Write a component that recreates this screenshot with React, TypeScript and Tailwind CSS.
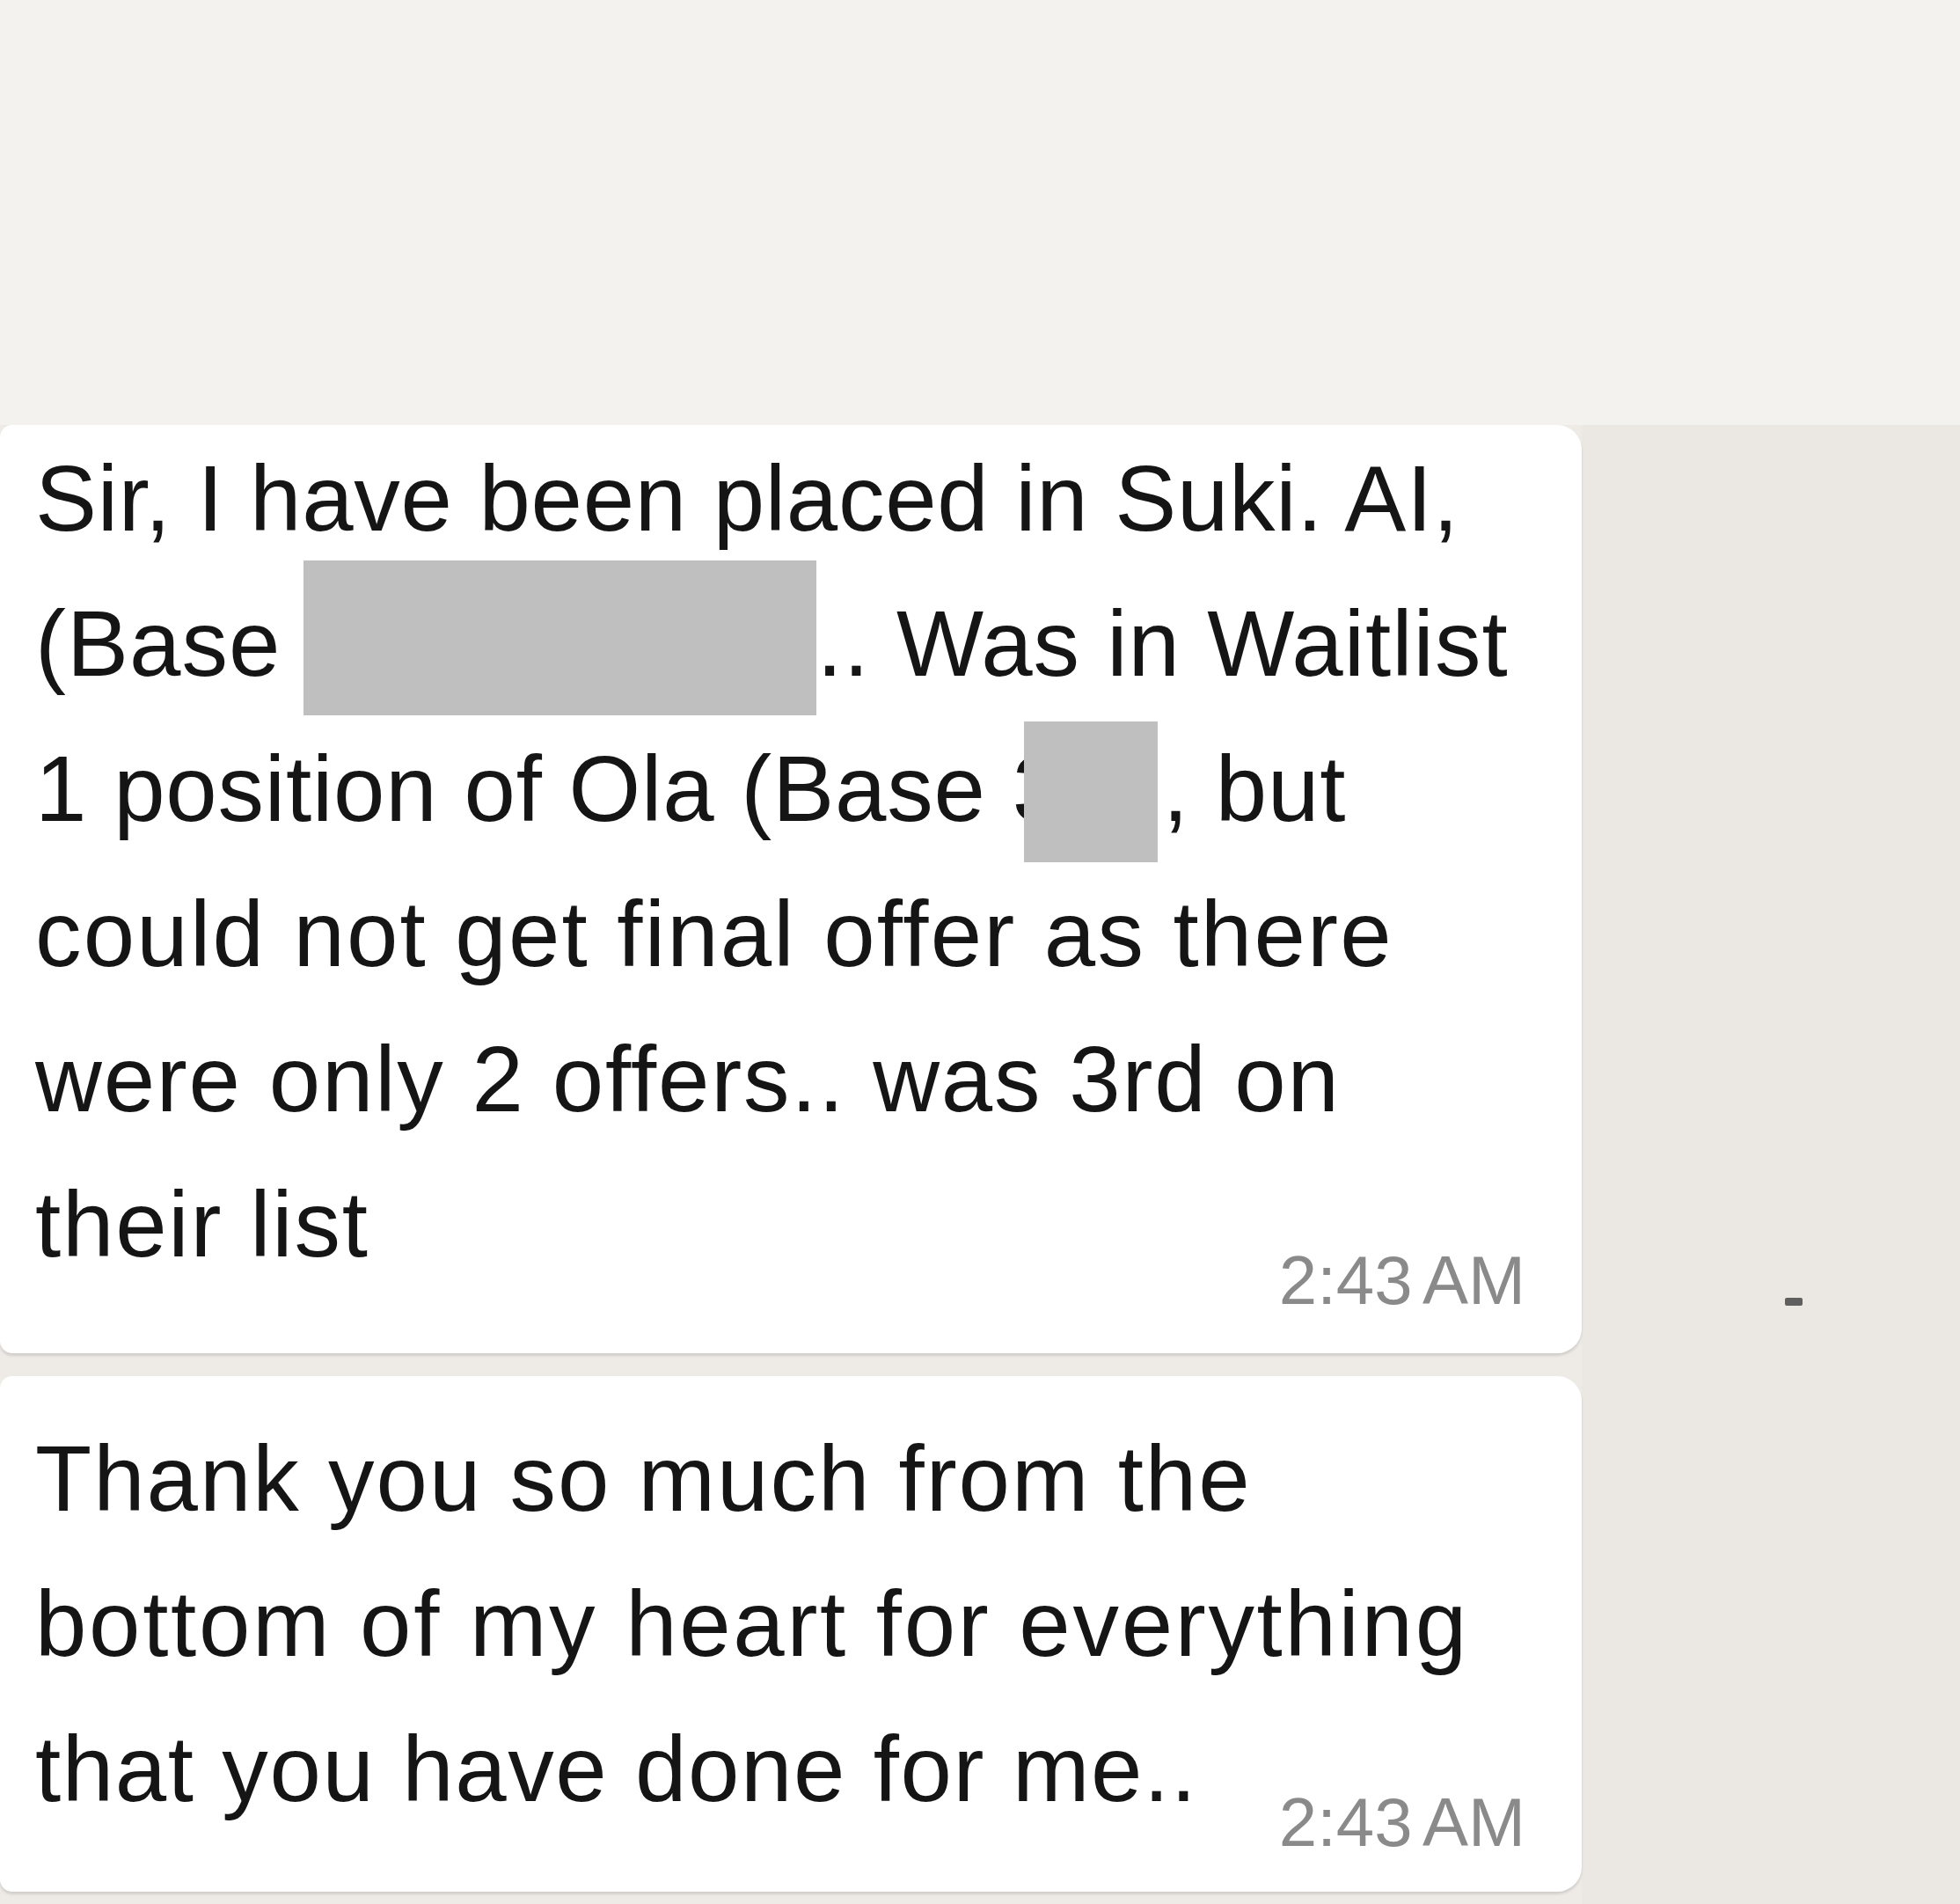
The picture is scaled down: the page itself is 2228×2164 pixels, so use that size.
const FONT = "font-['Liberation_Sans',Arial,sans-serif]";

function Redact({ className }: { className: string }) {
  return <span className={`relative inline-block bg-[#bfbfbf] align-top ${className}`} />;
}

function Timestamp({ className }: { className: string }) {
  return (
    <div className={`flex justify-end pr-[64px] ${className}`}>
      <span className="text-[78px] leading-[78px] text-[#8a8a8a] [word-spacing:-6px]">2:43 AM</span>
    </div>
  );
}

export default function App() {
  return (
    <div className={`w-[2228px] h-[2164px] flex flex-col overflow-hidden ${FONT}`}>
      {/* Top empty area */}
      <div className="h-[483px] bg-[#f3f2ef] shrink-0" />

      {/* Chat area */}
      <div className="flex-1 flex bg-[#ebe8e4]">
        <div className="w-[1798px] flex flex-col gap-[26px] bg-[#eeebe7]">
          {/* Bubble 1 */}
          <div className="bg-white rounded-r-[28px] rounded-l-[14px] pl-[40px] pt-[1px] pb-[44px] shadow-[0_3px_3px_rgba(0,0,0,0.12)]">
            <div className="text-[105px] leading-[165px] text-[#151515] whitespace-nowrap">
              <div className="tracking-[0.7px]">Sir, I have been placed in Suki. AI,</div>
              <div className="tracking-[1px]">
                (Base <Redact className="w-[583px] h-[176px] -mb-[20px] -top-[12px] -ml-[4px]" />.. Was in Waitlist
              </div>
              <div className="tracking-[0.8px]">
                1 position of Ola (Base 3<Redact className="w-[152px] h-[160px] -mb-[10px] top-[6px] -ml-[46px] mr-[6px]" />, but
              </div>
              <div className="tracking-[2.2px]">could not get final offer as there</div>
              <div className="tracking-[1.8px]">were only 2 offers.. was 3rd on</div>
              <div className="tracking-[1.8px]">their list</div>
            </div>
            <Timestamp className="-mt-[58px]" />
          </div>

          {/* Bubble 2 */}
          <div className="bg-white rounded-r-[28px] rounded-l-[14px] pl-[40px] pt-[34px] pb-[40px] shadow-[0_3px_3px_rgba(0,0,0,0.12)]">
            <div className="text-[105px] leading-[165px] text-[#151515] whitespace-nowrap">
              <div className="tracking-[2px]">Thank you so much from the</div>
              <div className="tracking-[2.7px]">bottom of my heart for everything</div>
              <div className="tracking-[1.6px]">that you have done for me..</div>
            </div>
            <Timestamp className="-mt-[61px]" />
          </div>
        </div>

        {/* Right strip */}
        <div className="flex-1 pl-[231px] pt-[992px]">
          <div className="w-[20px] h-[9px] rounded-[2px] bg-[#5f5f5f]" />
        </div>
      </div>
    </div>
  );
}
